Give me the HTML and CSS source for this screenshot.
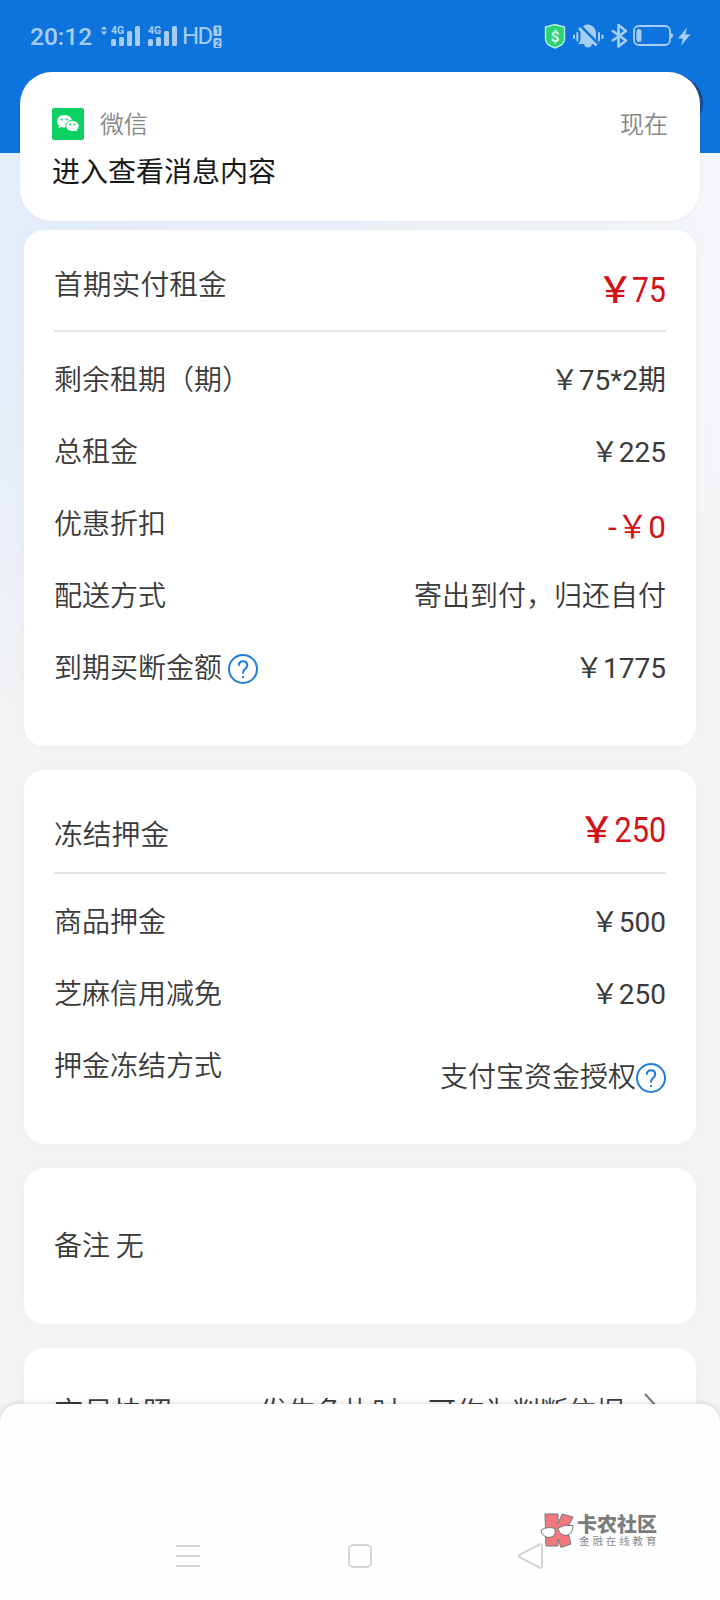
FILE: index.html
```
<!DOCTYPE html>
<html lang="zh-CN">
<head>
<meta charset="utf-8">
<title>订单详情</title>
<link rel="stylesheet" href="styles.css">
</head>
<body>
<div class="screen">
  <header class="hero">
    <div class="status">
      <span class="clock">20:12</span>
      <svg class="signals" width="80" height="30" viewBox="0 0 80 30">
        <path d="M5 4l3 3.600H2zM5 13L2 9.400h6z"/>
        <g id="sig">
          <text x="12" y="12" class="net">4G</text>
          <rect x="12" y="17" width="5" height="7" rx="1.5"/><rect x="20" y="15" width="5" height="9" rx="1.5"/>
          <rect x="28" y="9" width="5" height="15" rx="1.5"/><rect x="36" y="4" width="5" height="20" rx="1.5"/>
        </g>
        <use href="#sig" x="37"/>
      </svg>
      <span class="hd">HD</span>
      <svg class="sims" width="9" height="24" viewBox="0 0 9 24">
        <rect x="0.5" y="0.5" width="8" height="10.5" rx="1.5"/><rect x="0.5" y="13" width="8" height="10" rx="1.5"/>
        <text x="4.5" y="9.2">1</text><text x="4.5" y="21.5">2</text>
      </svg>
      <svg class="tray" width="150" height="30" viewBox="0 0 150 30">
        <path d="M11 2.500l9.500 2.500v12.500q0 5-9.500 8.500q-9.500-3.500-9.500-8.500V5z" fill="#2fd373" stroke="#b5efe0" stroke-width="1.400"/>
        <text x="11" y="19.500" class="dollar">$</text>
        <g fill="#a8cdf4">
          <path d="M36 8Q39 2.500 44 2.500Q52 3.500 52 12V17L55.500 22H34.500L36.500 18V10Z"/><path d="M40 21.500h8q-.5 4-4 4t-4-4z"/>
          <rect x="29" y="12.500" width="2" height="4.500" rx="1"/><rect x="32.300" y="10" width="2" height="9.500" rx="1"/>
          <rect x="54" y="10" width="2" height="9.500" rx="1"/><rect x="57.500" y="12.500" width="2" height="4.500" rx="1"/>
          <path d="M143 5.500L134 16.500h4.800l-1.800 7L146.500 12.500h-5.200z"/>
          <rect x="92.500" y="7" width="5" height="13" rx="2.500"/>
          <path d="M126 10.500q3 .5 3 3t-3 3z"/>
        </g>
        <path d="M35.500 3.500L54 22" stroke="#0d74dd" stroke-width="3.600"/>
        <path d="M35 6L52.500 23.500" stroke="#a8cdf4" stroke-width="2.600"/>
        <path d="M68 8.500l14 10-7.500 6V3l7.500 6-14 10" fill="none" stroke="#a8cdf4" stroke-width="2.600" stroke-linejoin="round"/>
        <rect x="90" y="4" width="36" height="19" rx="5" fill="none" stroke="#a8cdf4" stroke-width="1.800"/>
      </svg>
    </div>
  </header>

  <aside class="notice">
    <div class="notice-head">
      <svg class="wechat" width="32" height="32" viewBox="0 0 32 32">
        <rect width="32" height="32" rx="2" fill="#0bd163"/>
        <path d="M12.500 7c4.300 0 7.500 2.800 7.500 6.300s-3.200 6.200-7.500 6.200q-1.500 0-3-.5L6.500 20.500l.7-2.700Q5 16 5 13.300C5 9.800 8.200 7 12.500 7z" fill="#fff"/>
        <path d="M20.500 12.500c3.800 0 6.700 2.500 6.700 5.500q0 2.200-2 4l.5 2.500-2.700-1.400q-1.200.4-2.500.4c-3.800 0-6.800-2.500-6.800-5.500s3-5.500 6.800-5.500z" fill="#fff" stroke="#0bd163"/>
        <g fill="#0bd163"><circle cx="10" cy="11.500" r="1"/><circle cx="15" cy="11.500" r="1"/><circle cx="18.200" cy="16.500" r=".9"/><circle cx="22.600" cy="16.500" r=".9"/></g>
      </svg>
      <span class="app">微信</span>
      <span class="when">现在</span>
    </div>
    <p class="notice-body">进入查看消息内容</p>
  </aside>

  <main class="cards">
    <section class="card rent">
      <div class="head"><span>首期实付租金</span><strong class="price">￥<span class="din two">75</span></strong></div>
      <div class="row"><span>剩余租期（期）</span><span class="num">￥75*2期</span></div>
      <div class="row"><span>总租金</span><span class="num">￥225</span></div>
      <div class="row"><span>优惠折扣</span><span class="num off">-￥0</span></div>
      <div class="row"><span>配送方式</span><span>寄出到付，归还自付</span></div>
      <div class="row"><span class="ask">到期买断金额<svg class="help" viewBox="0 0 30 30"><circle cx="15" cy="15" r="14"/><path d="M10.800 11.800q0-4.500 4.200-4.500t4.200 4q0 2-2.100 3.700T15 18.500v1M15 22v2"/></svg></span><span class="num">￥1775</span></div>
    </section>

    <section class="card deposit">
      <div class="head"><span>冻结押金</span><strong class="price">￥<span class="din three">250</span></strong></div>
      <div class="row"><span>商品押金</span><span class="num">￥500</span></div>
      <div class="row"><span>芝麻信用减免</span><span class="num">￥250</span></div>
      <div class="row"><span>押金冻结方式</span><span class="ask method">支付宝资金授权<svg class="help" viewBox="0 0 30 30"><circle cx="15" cy="15" r="14"/><path d="M10.800 11.800q0-4.500 4.200-4.500t4.200 4q0 2-2.100 3.700T15 18.500v1M15 22v2"/></svg></span></div>
    </section>

    <section class="card remark">备注 无</section>

    <section class="card snapshot">
      <span class="title">交易快照</span>
      <span class="hint">发生争执时，可作为判断依据</span>
      <svg class="chevron" width="16" height="30" viewBox="0 0 16 30"><path d="M1 1l13 14L1 29"/></svg>
    </section>
  </main>

  <footer class="sheet">
    <svg class="nav" width="720" height="40" viewBox="0 0 720 40">
      <path d="M176 10h24M176 20h24M176 30h24"/>
      <rect x="349" y="9" width="22" height="22" rx="4.500"/>
      <path d="M539.500 8.500L520 18.500q-2 1.500 0 3L539.500 31.500q2.500 1 2.500-1.500V10q0-2.500-2.500-1.500z"/>
    </svg>
    <div class="brand">
      <svg width="34" height="36" viewBox="0 0 34 36">
        <path d="M5 1H18V11L22 1 33 4 27 16 31 31 21 34.500 18 26V33H6z" fill="#f27880" stroke="#777" stroke-width="1"/>
        <path d="M1 17q7-4 14-1.500 1.500 8.500-6 9-7-.5-8-7.500zM18 15q7-4 15-2.500 0 8.500-7 10-7-.5-8-7.500z" fill="#fff" stroke="#777" stroke-width="1"/>
      </svg>
      <div class="words"><b>卡农社区</b><small>金融在线教育</small></div>
    </div>
  </footer>
</div>
</body>
</html>
```
FILE: styles.css
```
* { box-sizing: border-box; }

body {
  margin: 0;
  font-family: Roboto, "Noto Sans CJK SC", sans-serif;
  color: #3a3a3a;
}

.screen {
  position: relative;
  width: 720px;
  height: 1600px;
  overflow: hidden;
  background:
    linear-gradient(rgba(244, 244, 244, 0) 350px, #f4f4f4 760px),
    linear-gradient(90deg, #e4edf9, #f4f6f9);
}

.hero { height: 153px; background: #0d74dd; }

/* Dark edge that shows past the notification's corner */
.hero::after {
  content: "";
  position: absolute;
  top: 75px;
  left: 623px;
  width: 80px;
  height: 56px;
  border-radius: 30px;
  background: #164a8c;
}

.status {
  display: flex;
  align-items: flex-start;
  height: 72px;
  padding: 22px 28px 0 30px;
  color: #a8cdf4;
}
.clock { width: 69px; font-size: 24.500px; line-height: 29px; font-weight: 500; }
.signals { fill: #a8cdf4; }
.net { font: bold 10.500px Roboto, sans-serif; }
.hd { width: 29px; margin-left: 3px; font-size: 24px; line-height: 29px; letter-spacing: -1.500px; }
.sims { margin-top: 3px; margin-left: 2px; fill: #a8cdf4; }
.sims text { fill: #0d74dd; font: bold 9px Roboto, sans-serif; text-anchor: middle; }
.tray { margin-left: auto; flex: none; margin-right: -2px; }
.dollar { fill: #d8f8e8; font: bold 15px Roboto, sans-serif; text-anchor: middle; }

/* Floating notification, above the page */
.notice {
  position: absolute;
  z-index: 2;
  top: 72px;
  left: 20px;
  width: 680px;
  height: 149px;
  padding: 36px 32px 0;
  border-radius: 32px;
  background: #fff;
  box-shadow: 0 1px 3px rgba(110, 120, 140, .08);
}
.notice-head {
  display: flex;
  align-items: center;
  height: 32px;
  gap: 16px;
  color: #858585;
  font-size: 24px;
  font-weight: 350;
  line-height: 28px;
}
.app, .when { margin-top: 1px; }
.when { margin-left: auto; }
.notice-body { margin: 13px 0 0; font-size: 28px; line-height: 40px; color: #181818; }

.cards { display: flex; flex-direction: column; gap: 24px; padding: 77px 24px 0; }
.card {
  flex: none;
  padding: 0 30px;
  border-radius: 20px;
  background: #fff;
  font-size: 28px;
  font-weight: 350;
  box-shadow: 0 0 16px rgba(60, 60, 70, .03);
}
.rent { height: 516px; }
.deposit { height: 374px; }
.remark { height: 156px; line-height: 157px; word-spacing: -1px; }

.head {
  display: flex;
  justify-content: space-between;
  height: 102px;
  border-bottom: 2px solid #e3e3e3;
  font-size: 28.800px;
  line-height: 40px;
  padding-top: 35px;
  margin-bottom: 13px;
}
.price {
  display: flex;
  margin-top: 2px;
  color: #d11216;
  font: 500 36px/40px "Noto Sans CJK SC", sans-serif;
}
.din {
  margin-top: 3px;
  font: 400 34.500px/40px Roboto, sans-serif;
  transform: scaleX(.87);
  transform-origin: right;
}
.two { margin-left: -6px; }
.three { margin-left: -7px; transform: scaleX(.89); }

.row { display: flex; justify-content: space-between; height: 72px; line-height: 72px; }
.num { font-weight: 400; }
.off { padding-top: 3px; font-size: 31.500px; color: #d11216; }
.ask { display: flex; align-items: center; gap: 6px; }
.help { width: 30px; height: 30px; fill: none; stroke: #1f7bdc; stroke-width: 2; margin-top: -1px; }
.method { gap: 0; padding-top: 22px; }

.deposit .head { height: 104px; padding-top: 45px; margin-bottom: 13px; }
.deposit .price { margin-top: -8px; }

.snapshot { display: flex; align-items: center; height: 124px; }
.title { font-size: 29.500px; }
.hint { margin-left: auto; }
.chevron { margin-left: 20px; margin-right: 6px; margin-top: -4px; fill: none; stroke: #777; stroke-width: 2; }

/* Bottom sheet, covers the scrolled cards */
.sheet {
  position: absolute;
  z-index: 3;
  top: 1404px;
  left: 0;
  width: 720px;
  height: 196px;
  padding-top: 132px;
  border-radius: 18px 18px 0 0;
  background: #fefefe;
  box-shadow: 0 -1px 5px rgba(0, 0, 0, .14);
}
.nav { display: block; fill: none; stroke: #d3d3d3; stroke-width: 2; }
.brand {
  position: absolute;
  top: 109px;
  left: 540px;
  display: flex;
  gap: 3px;
}
.words { display: flex; flex-direction: column; font-family: "Noto Sans CJK SC", sans-serif; white-space: nowrap; }
.words b { font-size: 20px; line-height: 22px; font-weight: 900; color: #7c7c7c; }
.words small { padding-left: 2px; font-size: 10.500px; line-height: 12px; letter-spacing: 2.900px; color: #8c8c8c; }
```
